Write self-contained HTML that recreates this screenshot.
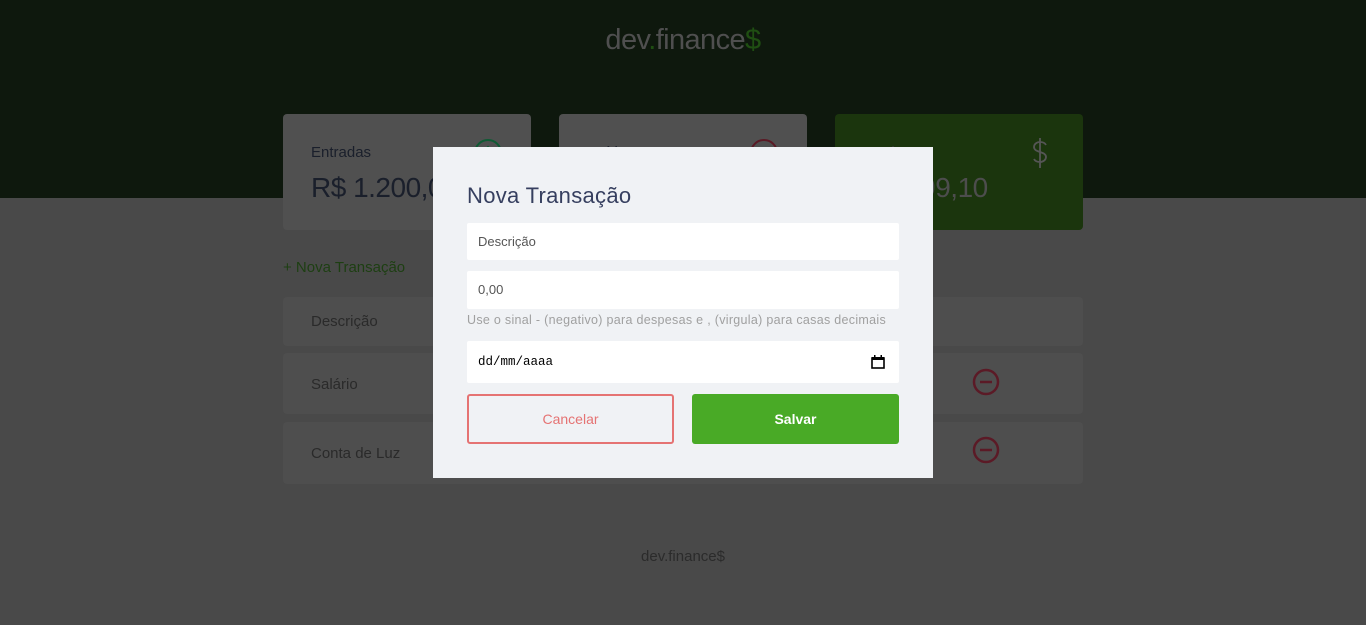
<!DOCTYPE html>
<html><head><meta charset="utf-8"><style>
*{margin:0;padding:0;box-sizing:border-box}
body{width:1366px;height:625px;background:#494949;font-family:"Liberation Sans",sans-serif;position:relative;overflow:hidden}
.hdr{position:absolute;left:0;top:0;width:1366px;height:198px;background:#0e180d}
.logo{position:absolute;top:24px;width:100%;text-align:center;font-size:29px;color:#4f4f4f;letter-spacing:-0.6px}
.logo b{color:#1f4e12;font-weight:normal}
.card{position:absolute;top:114px;width:248px;height:116px;background:#505050;border-radius:4px}
.card .l{position:absolute;left:28px;top:30px;font-size:15px;color:#1a1f2b}
.card .v{position:absolute;left:28px;top:58px;font-size:28px;color:#1a1f2b;letter-spacing:-0.5px}
.ic{position:absolute}
.nt{position:absolute;left:283px;top:259px;font-size:15px;color:#1d3f12}
.row{position:absolute;left:283px;width:800px;background:#4e4e4e;border-radius:4px;font-size:15px;color:#2a2a2a}
.row span{position:absolute;left:28px}
.foot{position:absolute;top:548px;width:100%;text-align:center;font-size:15px;color:#2b2b2b}
.modal{position:absolute;left:433px;top:147px;width:500px;height:331px;background:#f0f2f5}
.modal h2{position:absolute;left:34px;top:36px;font-size:22px;font-weight:normal;color:#363f5f;letter-spacing:0.3px}
.in{position:absolute;left:34px;width:432px;background:#fff;border-radius:2px;font-size:13px;color:#555;padding-left:11px}
.hint{position:absolute;left:34px;top:166px;font-size:12.5px;color:#a0a0a0;letter-spacing:0.3px}
.btn{position:absolute;top:247px;width:207px;height:50px;border-radius:3px;font-size:14px;text-align:center;line-height:50px}
</style></head><body>
<div class="hdr"><div class="logo">dev<b>.</b>finance<b>$</b></div></div>
<div class="card" style="left:283px"><div class="l">Entradas</div><div class="v">R$ 1.200,00</div>
<svg class="ic" style="left:190px;top:24px" width="30" height="30"><circle cx="15" cy="15" r="13" fill="none" stroke="#0f5a34" stroke-width="2"/><path d="M15 21V9M10 14l5-5 5 5" fill="none" stroke="#0f5a34" stroke-width="2"/></svg></div>
<div class="card" style="left:559px"><div class="l">Saídas</div><div class="v">R$ 300,90</div>
<svg class="ic" style="left:190px;top:24px" width="30" height="30"><circle cx="15" cy="15" r="13" fill="none" stroke="#5a1a25" stroke-width="2"/><path d="M15 9v12M10 16l5 5 5-5" fill="none" stroke="#5a1a25" stroke-width="2"/></svg></div>
<div class="card" style="left:835px;background:#1b350d"><div class="l" style="color:#3a3a3a">Total</div><div class="v" style="color:#4d4d4d">R$ 899,10</div>
<svg class="ic" style="left:190px;top:22px" width="30" height="34"><path d="M21 9c-1-2-3-3-6-3s-6 2-6 5 3 4 6 5 6 2 6 5-3 5-6 5-5-1-6-3M15 2v30" fill="none" stroke="#555" stroke-width="1.8"/></svg></div>
<div class="nt">+ Nova Transação</div>
<div class="row" style="top:297px;height:49px"><span style="top:16px">Descrição</span></div>
<div class="row" style="top:353px;height:61px"><span style="top:23px">Salário</span>
<svg class="ic" style="left:688px;top:14px" width="30" height="30"><circle cx="15" cy="15" r="12" fill="none" stroke="#5b1a26" stroke-width="2.5"/><path d="M9 15h12" stroke="#5b1a26" stroke-width="2.5"/></svg></div>
<div class="row" style="top:422px;height:62px"><span style="top:23px">Conta de Luz</span>
<svg class="ic" style="left:688px;top:13px" width="30" height="30"><circle cx="15" cy="15" r="12" fill="none" stroke="#5b1a26" stroke-width="2.5"/><path d="M9 15h12" stroke="#5b1a26" stroke-width="2.5"/></svg></div>
<div class="foot">dev.finance$</div>
<div class="modal">
<h2>Nova Transação</h2>
<div class="in" style="top:76px;height:37px;line-height:37px">Descrição</div>
<div class="in" style="top:124px;height:38px;line-height:38px">0,00</div>
<div class="hint">Use o sinal - (negativo) para despesas e , (virgula) para casas decimais</div>
<div class="in" style="top:194px;height:42px;line-height:43px;font-family:'Liberation Mono',monospace;color:#000;font-size:12.5px">dd/mm/aaaa
<svg style="position:absolute;right:14px;top:14px" width="14" height="14"><rect x="1" y="3" width="12" height="10" fill="none" stroke="#000" stroke-width="1.6"/><rect x="1" y="2" width="12" height="3" fill="#000"/><rect x="3" y="0" width="1.5" height="3" fill="#000"/><rect x="9.5" y="0" width="1.5" height="3" fill="#000"/></svg></div>
<div class="btn" style="left:34px;border:2px solid #e57373;color:#e57373;line-height:46px">Cancelar</div>
<div class="btn" style="left:259px;background:#49aa26;color:#fff;font-weight:bold">Salvar</div>
</div>
</body></html>
